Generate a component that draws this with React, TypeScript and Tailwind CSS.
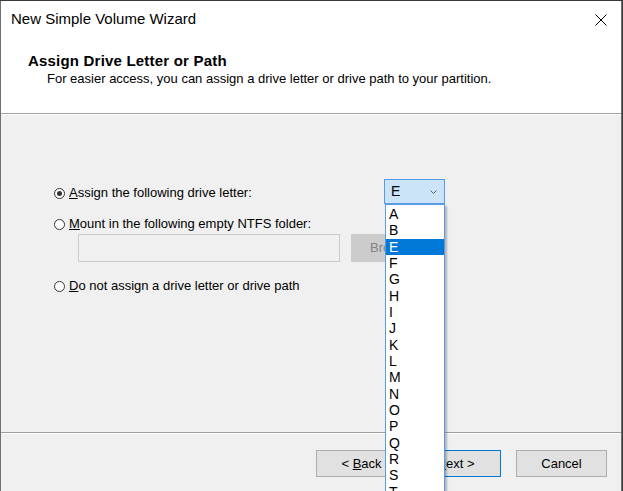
import React from 'react';

const letters = ['A', 'B', 'E', 'F', 'G', 'H', 'I', 'J', 'K', 'L', 'M', 'N', 'O', 'P', 'Q', 'R', 'S', 'T'];

function Radio({ checked }: { checked?: boolean }) {
  return (
    <span className="w-[11px] h-[11px] rounded-full border border-[#333333] bg-white flex items-center justify-center shrink-0">
      {checked && <span className="w-[5px] h-[5px] rounded-full bg-[#333333]" />}
    </span>
  );
}

function Btn({ children, primary, className = '' }: { children: React.ReactNode; primary?: boolean; className?: string }) {
  return (
    <div
      className={`h-[27px] w-[91px] flex items-center justify-center bg-[#e1e1e1] border text-[13px] text-black whitespace-pre ${
        primary ? 'border-[#0078d7]' : 'border-[#adadad]'
      } ${className}`}
    >
      {children}
    </div>
  );
}

export default function App() {
  return (
    <div
      className="relative w-[623px] h-[491px] overflow-hidden bg-[#3a3a3a] pt-px"
      style={{ fontFamily: '"Liberation Sans", Arial, sans-serif' }}
    >
      <div className="w-[622px] h-[490px] flex flex-col bg-[#f0f0f0] border-l border-r border-[#707070]">
        {/* title bar */}
        <div className="h-[37px] bg-white flex items-center justify-between pl-[10px] pr-[14px] shrink-0">
          <span className="text-[15px] text-black">New Simple Volume Wizard</span>
          <svg width="12" height="12" viewBox="0 0 12 12" className="mt-px">
            <path d="M0.5 0.5 L11.5 11.5 M11.5 0.5 L0.5 11.5" stroke="#000" strokeWidth="1" />
          </svg>
        </div>

        {/* header */}
        <div className="h-[75px] bg-white shrink-0 pl-[27px] pt-[14px]">
          <div className="text-[15px] font-bold text-black leading-[17px] tracking-[0.2px]">Assign Drive Letter or Path</div>
          <div className="text-[13px] text-black leading-[16px] mt-[2px] pl-[19px]">
            For easier access, you can assign a drive letter or drive path to your partition.
          </div>
        </div>
        <div className="h-[2px] shrink-0 border-t border-[#a0a0a0] border-b border-b-white" />

        {/* body */}
        <div className="flex-1 relative">
          <div className="pl-[53px] pt-[64px]">
            <div className="flex items-center h-[25px]">
              <div className="flex items-center pt-[3px] w-[330px]">
                <Radio checked />
                <span className="ml-[4px] text-[13px] text-black">
                  <u>A</u>ssign the following drive letter:
                </span>
              </div>
              <div className="w-[61px] h-[25px] bg-[#cce4f7] border border-[#569de5] flex items-center justify-between pl-[6px] pr-[7px]">
                <span className="text-[14px] text-black">E</span>
                <svg width="7" height="4" viewBox="0 0 7 4">
                  <path d="M0.5 0.5 L3.5 3.5 L6.5 0.5" stroke="#606060" fill="none" strokeWidth="1" />
                </svg>
              </div>
            </div>
            <div className="flex items-center h-[16px] mt-[12px]">
              <Radio />
              <span className="ml-[4px] text-[13px] text-black">
                <u>M</u>ount in the following empty NTFS folder:
              </span>
            </div>
            <div className="flex mt-[2px] ml-[24px] gap-[11px]">
              <div className="w-[262px] h-[28px] bg-[#f0f0f0] border border-[#cccccc]" />
              <div className="w-[76px] h-[28px] bg-[#cccccc] flex items-center pl-[19px] text-[13px] text-[#838383]">
                Browse...
              </div>
            </div>
            <div className="flex items-center h-[16px] mt-[16px]">
              <Radio />
              <span className="ml-[4px] text-[13px] text-black">
                <u>D</u>o not assign a drive letter or drive path
              </span>
            </div>
          </div>
        </div>

        <div className="h-[2px] shrink-0 border-t border-[#a0a0a0] border-b border-b-white" />
        {/* footer */}
        <div className="h-[57px] shrink-0 flex items-start pt-[16px] pl-[315px]">
          <Btn>
            {'< '}
            <u>B</u>ack
          </Btn>
          <Btn primary className="ml-[3px]">
            <u>N</u>
            {'ext >'}
          </Btn>
          <Btn className="ml-[15px]">Cancel</Btn>
        </div>
      </div>

      {/* open dropdown list */}
      <div className="absolute left-[385px] top-[204px] w-[60px] h-[300px] bg-white border border-[#569de5] shadow-[2px_2px_2px_rgba(0,0,0,0.25)] pt-[1px]">
        {letters.map((l) => (
          <div
            key={l}
            className={`h-[16.33px] flex items-center pl-[3px] text-[14px] leading-none ${
              l === 'E' ? 'bg-[#0078d7] text-white' : 'text-black'
            }`}
          >
            {l}
          </div>
        ))}
      </div>
    </div>
  );
}
